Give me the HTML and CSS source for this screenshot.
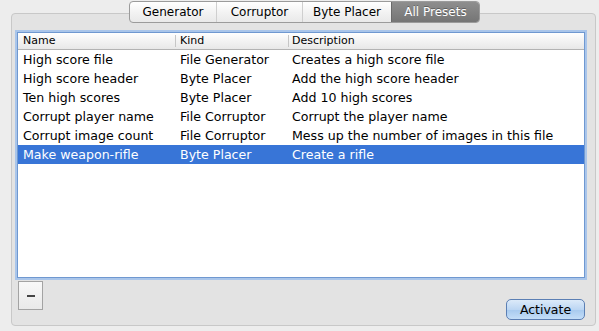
FILE: index.html
```html
<!DOCTYPE html>
<html lang="en">

<head>
    <meta charset="UTF-8">
    <title>Presets</title>
    <link rel="stylesheet" href="styles.css">
</head>

<body>
    <div class="window">
        <div class="tabs">
            <div class="tab tab-gen">Generator</div>
            <div class="tab tab-cor">Corruptor</div>
            <div class="tab tab-byte">Byte Placer</div>
            <div class="tab tab-all selected">All Presets</div>
        </div>

        <div class="group">
            <div class="table">
                <div class="thead">
                    <div class="th">Name</div>
                    <div class="th">Kind</div>
                    <div class="th">Description</div>
                </div>
                <div class="tr">
                    <div class="td">High score file</div>
                    <div class="td">File Generator</div>
                    <div class="td">Creates a high score file</div>
                </div>
                <div class="tr">
                    <div class="td">High score header</div>
                    <div class="td">Byte Placer</div>
                    <div class="td">Add the high score header</div>
                </div>
                <div class="tr">
                    <div class="td">Ten high scores</div>
                    <div class="td">Byte Placer</div>
                    <div class="td">Add 10 high scores</div>
                </div>
                <div class="tr">
                    <div class="td">Corrupt player name</div>
                    <div class="td">File Corruptor</div>
                    <div class="td">Corrupt the player name</div>
                </div>
                <div class="tr">
                    <div class="td">Corrupt image count</div>
                    <div class="td">File Corruptor</div>
                    <div class="td">Mess up the number of images in this file</div>
                </div>
                <div class="tr selected">
                    <div class="td">Make weapon-rifle</div>
                    <div class="td">Byte Placer</div>
                    <div class="td">Create a rifle</div>
                </div>
            </div>

            <div class="footer">
                <button class="minus" type="button"><span class="bar"></span></button>
                <button class="activate" type="button">Activate</button>
            </div>
        </div>
    </div>
</body>

</html>
```

FILE: styles.css
```css
body {
    margin: 0;
    background-color: #ededed;
    font-family: "DejaVu Sans", Verdana, sans-serif;
    color: #000;
}

.window {
    width: 599px;
    height: 331px;
    overflow: hidden;
}

/* segmented control */
.tabs {
    display: flex;
    margin: 1px 0 -10px 129px;
    width: 351px;
    height: 22px;
    position: relative;
    z-index: 1;
    box-sizing: border-box;
    border: 1px solid #9b9b9b;
    border-radius: 4px;
    background: linear-gradient(#ffffff, #f1f1f1 60%, #e9e9e9);
    overflow: hidden;
}

.tab {
    display: flex;
    align-items: center;
    justify-content: center;
    font-size: 12px;
    border-left: 1px solid #cfcfcf;
    box-sizing: border-box;
}

.tab:first-child {
    border-left: none;
}

.tab-gen { width: 86px; }
.tab-cor { width: 86px; }
.tab-byte { width: 89px; }
.tab-all { flex: 1; }

.tab.selected {
    background: linear-gradient(#8e8e8e, #757575);
    color: #fff;
    border-left: 1px solid #6a6a6a;
    text-shadow: 0 -1px 0 rgba(0, 0, 0, 0.3);
}

/* group box */
.group {
    margin: 0 3px 0 11px;
    height: 313px;
    box-sizing: border-box;
    border: 1px solid #c8c8c8;
    border-radius: 4px;
    background-color: #e3e3e3;
    padding: 18px 10px 5px 5px;
    display: flex;
    flex-direction: column;
}

.table {
    height: 246px;
    box-sizing: border-box;
    background-color: #fff;
    border: 1px solid #6f98d0;
    box-shadow: 0 0 0 2px #a9c5ea;
}

.thead,
.tr {
    display: grid;
    grid-template-columns: 157px 113px 1fr;
}

.thead {
    height: 16px;
    align-items: center;
    border-bottom: 1px solid #b3b3b3;
    background: linear-gradient(#ffffff, #f3f3f3 50%, #e8e8e8);
    font-size: 11px;
}

.th {
    padding-left: 5px;
    line-height: 12px;
}

.th + .th {
    border-left: 1px solid #c6c6c6;
    padding-left: 4px;
}

.th:last-child {
    padding-left: 3px;
}

.tr {
    height: 19px;
    align-items: center;
    font-size: 12.6px;
}

.td {
    padding-left: 5px;
    white-space: nowrap;
}

.td:last-child {
    padding-left: 4px;
}

.tr.selected {
    background-color: #3875d7;
    color: #fff;
}

/* bottom buttons */
.footer {
    flex: 1;
    display: flex;
    justify-content: space-between;
    align-items: flex-start;
}

.minus {
    margin: 3px 0 0 1px;
    width: 25px;
    height: 29px;
    padding: 0;
    border: 1px solid #a3a3a3;
    background: linear-gradient(#f8f8f8, #e9e9e9);
    display: flex;
    align-items: center;
    justify-content: center;
}

.minus .bar {
    display: block;
    width: 8px;
    height: 2px;
    background-color: #444;
}

.activate {
    align-self: flex-end;
    width: 79px;
    height: 21px;
    padding: 0;
    border: 1px solid #5b7fb4;
    border-radius: 5px;
    background: linear-gradient(#dceaf9, #bcd6f3 50%, #a9cbef 55%, #c4def8);
    font-family: "DejaVu Sans", Verdana, sans-serif;
    font-size: 12.5px;
    color: #000;
}
```
